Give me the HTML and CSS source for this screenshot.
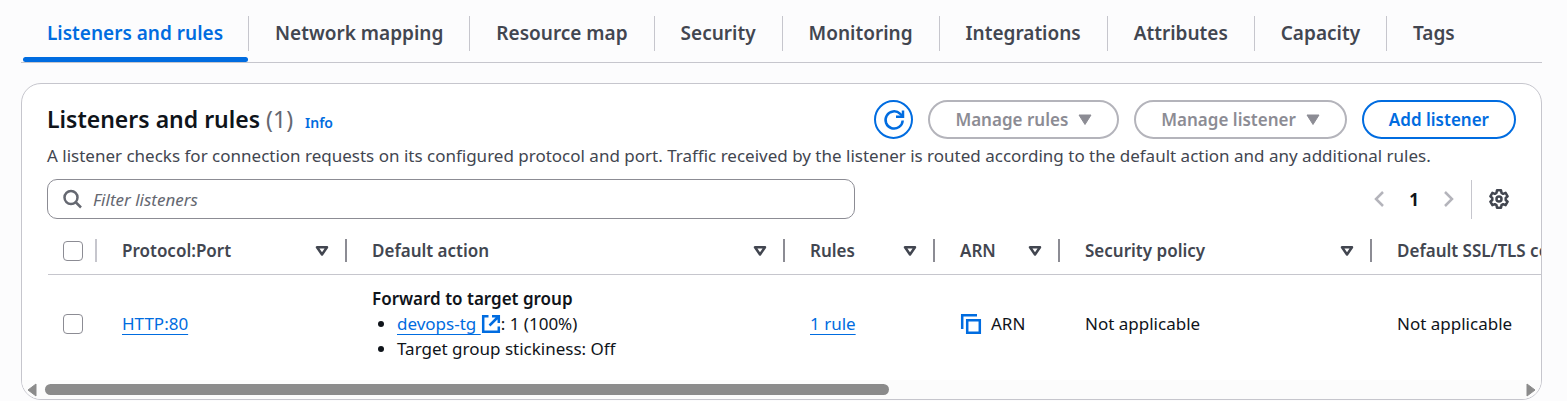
FILE: index.html
```html
<!DOCTYPE html>
<html lang="en">
<head>
<meta charset="utf-8">
<title>Listeners and rules</title>
<link rel="stylesheet" href="styles.css">
</head>
<body>
<svg class="sprite" aria-hidden="true">
  <symbol id="sort" viewBox="0 0 14 12"><path d="M2 2.200h10L7 9.500z" fill="none" stroke="currentColor" stroke-width="2.500" stroke-linejoin="round"/></symbol>
  <symbol id="caret" viewBox="0 0 14 12"><path d="M1 1h12L7 10.500z" fill="currentColor" stroke="currentColor" stroke-linejoin="round"/></symbol>
</svg>
<nav class="tabs">
  <a class="tab active" href="#listeners"><span>Listeners and rules</span></a>
  <a class="tab" href="#network"><span>Network mapping</span></a>
  <a class="tab" href="#resources"><span>Resource map</span></a>
  <a class="tab" href="#security"><span>Security</span></a>
  <a class="tab" href="#monitoring"><span>Monitoring</span></a>
  <a class="tab" href="#integrations"><span>Integrations</span></a>
  <a class="tab" href="#attributes"><span>Attributes</span></a>
  <a class="tab" href="#capacity"><span>Capacity</span></a>
  <a class="tab" href="#tags"><span>Tags</span></a>
</nav>
<main class="card" id="listeners">
  <header class="card-header">
    <div class="heading">
      <h2>Listeners and rules <span class="count">(1)</span></h2>
      <a class="info" href="#info">Info</a>
    </div>
    <div class="actions">
      <button class="btn round" type="button" aria-label="Refresh">
        <svg width="22" height="22" viewBox="0 0 22 22" fill="none" stroke="currentColor" stroke-width="2.500"><path d="M19.700 11.500a8.600 8.600 0 1 1-2.500-6.600L20 7.500"/><path d="M20 1.500v6.300h-7"/></svg>
      </button>
      <button class="btn" type="button" disabled>Manage rules <svg class="caret" width="14" height="12"><use href="#caret"/></svg></button>
      <button class="btn" type="button" disabled>Manage listener <svg class="caret" width="14" height="12"><use href="#caret"/></svg></button>
      <button class="btn" type="button">Add listener</button>
    </div>
  </header>
  <p class="description">A listener checks for connection requests on its configured protocol and port. Traffic received by the listener is routed according to the default action and any additional rules.</p>
  <div class="tools">
    <label class="filter">
      <svg width="20" height="20" viewBox="0 0 20 20" fill="none" stroke="currentColor" stroke-width="2.500"><circle cx="8" cy="8.500" r="6.500"/><path d="M12.500 13l5.500 5.500"/></svg>
      <input type="text" placeholder="Filter listeners" aria-label="Filter listeners">
    </label>
    <div class="pager">
      <button class="icon-btn muted" type="button" aria-label="Previous page"><svg width="12" height="18" viewBox="0 0 12 18" fill="none" stroke="currentColor" stroke-width="2.500"><path d="M10 2L3 9l7 7"/></svg></button>
      <span class="page">1</span>
      <button class="icon-btn muted" type="button" aria-label="Next page"><svg width="12" height="18" viewBox="0 0 12 18" fill="none" stroke="currentColor" stroke-width="2.500"><path d="M2 2l7 7-7 7"/></svg></button>
      <span class="rule"></span>
      <button class="icon-btn" type="button" aria-label="Preferences"><svg width="20" height="20" viewBox="0 0 20 20" fill="none" stroke="currentColor" stroke-width="2.500" stroke-linejoin="round"><path d="M8 1.300h4l.5 2.500 1.700 1 2.400-.9 2 3.400-1.900 1.700v2l1.900 1.700-2 3.400-2.400-.9-1.700 1-.5 2.500H8l-.5-2.500-1.700-1-2.400.9-2-3.400L3.300 11V9L1.400 7.300l2-3.400 2.400.9 1.700-1z"/><circle cx="10" cy="10" r="2.500"/></svg></button>
    </div>
  </div>
  <div class="table-wrap">
    <table>
      <colgroup><col class="c-check"><col class="c-port"><col class="c-action"><col class="c-rules"><col class="c-arn"><col class="c-policy"><col class="c-cert"></colgroup>
      <thead>
        <tr>
          <th class="check"><div class="head"><input type="checkbox" aria-label="Select all listeners"></div></th>
          <th><div class="head">Protocol:Port <svg width="14" height="12"><use href="#sort"/></svg></div></th>
          <th><div class="head">Default action <svg width="14" height="12"><use href="#sort"/></svg></div></th>
          <th><div class="head">Rules <svg width="14" height="12"><use href="#sort"/></svg></div></th>
          <th><div class="head">ARN <svg width="14" height="12"><use href="#sort"/></svg></div></th>
          <th><div class="head">Security policy <svg width="14" height="12"><use href="#sort"/></svg></div></th>
          <th><div class="head">Default SSL/TLS certificate</div></th>
        </tr>
      </thead>
      <tbody>
        <tr>
          <td class="check"><input type="checkbox" aria-label="Select HTTP:80"></td>
          <td><a class="link" href="#http80">HTTP:80</a></td>
          <td>
            <strong>Forward to target group</strong>
            <ul>
              <li><a class="link" href="#devops-tg">devops-tg <svg class="external" width="20" height="20" viewBox="0 0 20 20" fill="none" stroke="currentColor" stroke-width="2.500"><path d="M7.500 2.200H2.200v15.600h15.600v-5.300M11 2.200h6.800V9M17.500 2.500L8.500 11.500"/></svg></a>: 1 (100%)</li>
              <li>Target group stickiness: Off</li>
            </ul>
          </td>
          <td><a class="link" href="#rules">1 rule</a></td>
          <td><div class="copy"><button class="icon-btn accent" type="button" aria-label="Copy ARN"><svg width="22" height="22" viewBox="0 0 22 22" fill="none" stroke="currentColor" stroke-width="2.500"><path d="M2.200 16V2.200H17M7.200 7.200h12.600v12.600H7.200z"/></svg></button>ARN</div></td>
          <td>Not applicable</td>
          <td>Not applicable</td>
        </tr>
      </tbody>
    </table>
  </div>
  <div class="scrollbar" aria-hidden="true">
    <svg width="10" height="14" viewBox="0 0 10 14"><path d="M9 1v12L1 7z" fill="currentColor" stroke="currentColor" stroke-linejoin="round"/></svg>
    <div class="track"><div class="thumb"></div></div>
    <svg width="10" height="14" viewBox="0 0 10 14"><path d="M1 1v12l8-6z" fill="currentColor" stroke="currentColor" stroke-linejoin="round"/></svg>
  </div>
</main>
</body>
</html>
```
FILE: styles.css
```css
* { box-sizing: border-box; }
body {
  margin: 0;
  padding: 0 25px 0 21px;
  background: #fcfcfd;
  color: #0f141a;
  font: 17px/25px "Noto Sans", "Open Sans", sans-serif;
}
.sprite { position: absolute; width: 0; height: 0; }
svg { flex: none; }
button, input { font: inherit; margin: 0; }

.tabs { display: flex; padding: 16px 0 0 1px; border-bottom: 1px solid #c6c6cd; }
.tab {
  display: flex;
  flex-direction: column;
  color: #424650;
  font-size: 19px;
  font-weight: 600;
  text-decoration: none;
  white-space: nowrap;
}
.tab span { padding: 5px 26px; border-right: 1px solid #c6c6cd; }
.tab:first-child span { padding: 5px 25px; }
.tab:last-child span { border: 0; }
.tab::after { content: ""; height: 5px; margin: 6px 1px 0; border-radius: 3px; }
.tab.active { color: #006ce0; }
.tab.active::after { background: #006ce0; }

.card {
  margin-top: 20px;
  padding-top: 16px;
  border: 1px solid #c6c6cd;
  border-radius: 20px;
  background: #fff;
  overflow: hidden;
}
.card-header, .tools { display: flex; justify-content: space-between; align-items: center; padding: 0 25px; }
.heading { display: flex; align-items: baseline; gap: 12px; }
h2 { margin: 0; font-size: 23px; font-weight: 600; line-height: 35px; }
.count { color: #656871; font-weight: 400; }
.info { color: #006ce0; font-size: 14px; font-weight: 600; text-decoration: none; }
.actions { display: flex; gap: 15px; }
.btn {
  display: flex;
  align-items: center;
  justify-content: center;
  gap: 10px;
  height: 39px;
  padding: 0 25px;
  border: 2px solid #006ce0;
  border-radius: 20px;
  background: #fff;
  color: #006ce0;
  font-weight: 600;
  white-space: nowrap;
}
.btn:disabled { border-color: #b4b4bb; color: #8c8c94; }
.btn.round { width: 39px; padding: 0; }
.description { margin: 4px 25px 11px; color: #424650; }

.filter {
  display: flex;
  align-items: center;
  gap: 10px;
  width: 55%;
  height: 40px;
  padding: 0 15px;
  border: 1px solid #8c8c94;
  border-radius: 10px;
  color: #656871;
}
.filter input { flex: 1; min-width: 0; padding: 0; border: 0; outline: 0; background: none; }
.filter input::placeholder { color: #656871; font-style: italic; opacity: 1; }
.pager { display: flex; align-items: center; }
.icon-btn { display: flex; padding: 0 7px; border: 0; background: none; color: #424650; }
.icon-btn.muted { color: #b4b4bb; }
.page { padding: 0 17px; font-weight: 700; }
.rule { width: 1px; height: 39px; margin: 0 10px 0 9px; background: #c6c6cd; }

.table-wrap { margin-left: 26px; padding-bottom: 7px; overflow: hidden; }
table { width: 1750px; border-collapse: separate; border-spacing: 0; table-layout: fixed; }
.c-check { width: 49px; }
.c-port { width: 250px; }
.c-action { width: 438px; }
.c-rules { width: 150px; }
.c-arn { width: 125px; }
.c-policy { width: 312px; }
th, td { padding: 0 0 0 25px; text-align: left; white-space: nowrap; }
th { padding-top: 20px; padding-bottom: 12px; border-bottom: 1px solid #c6c6cd; color: #424650; font-weight: 600; }
td { padding-top: 11px; padding-bottom: 12px; }
.head {
  display: flex;
  align-items: center;
  justify-content: space-between;
  height: 23px;
  padding-right: 16px;
  border-right: 2px solid #8c8c94;
}
.check { padding-left: 15px; }
.check .head { padding: 0; border-color: #c6c6cd; }
input[type="checkbox"] {
  display: block;
  appearance: none;
  width: 20px;
  height: 20px;
  border: 1px solid #8c8c94;
  border-radius: 4px;
  background: #fff;
}
strong { display: block; font-weight: 600; }
ul { margin: 0; padding-left: 25px; }
.link { color: #006ce0; text-underline-offset: 4px; text-decoration-thickness: 1px; }
.external { vertical-align: -4px; }
.copy { display: flex; align-items: center; gap: 9px; }
.icon-btn.accent { padding: 0; color: #006ce0; }

.scrollbar { display: flex; align-items: center; height: 19px; padding: 0 5px; background: #fcfcfc; color: #8b8b8b; }
.track { flex: 1; padding: 0 8px; }
.thumb { width: 57.3%; height: 11px; border-radius: 6px; background: currentColor; }
```
